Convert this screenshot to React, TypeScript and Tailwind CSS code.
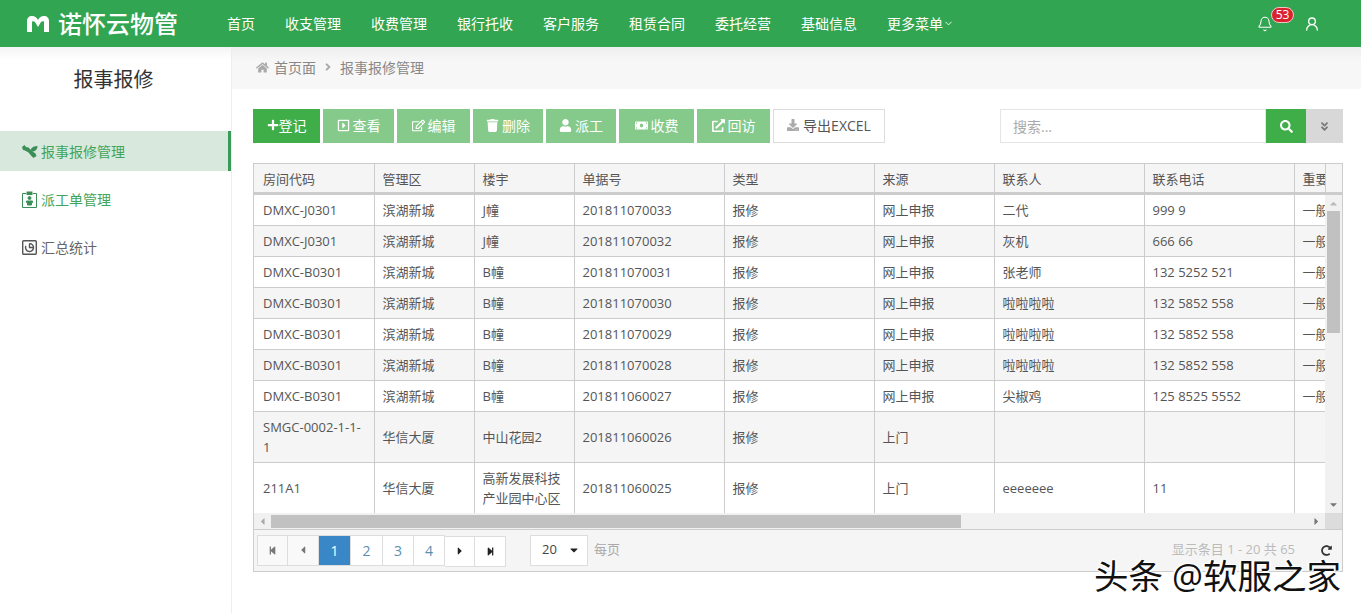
// Repair-report workbench: green top nav, side menu, toolbar and a data table with pager.
import { Bell, ChevronDown, UserRound } from "lucide-react";
import {
  FaAngleDoubleDown,
  FaAngleRight,
  FaCaretDown,
  FaCaretLeft,
  FaCaretRight,
  FaCaretUp,
  FaDownload,
  FaExternalLinkAlt,
  FaHome,
  FaMoneyBill,
  FaPlus,
  FaRedoAlt,
  FaRegCaretSquareRight,
  FaRegEdit,
  FaSearch,
  FaStepBackward,
  FaStepForward,
  FaTrash,
  FaUser,
} from "react-icons/fa";

const NAV = ["首页", "收支管理", "收费管理", "银行托收", "客户服务", "租赁合同", "委托经营", "基础信息"];

const ACTIONS = [
  { label: "查看", icon: FaRegCaretSquareRight, width: "w-[71px]" },
  { label: "编辑", icon: FaRegEdit, width: "w-[73px]" },
  { label: "删除", icon: FaTrash, width: "w-[70px]" },
  { label: "派工", icon: FaUser, width: "w-[70px]" },
  { label: "收费", icon: FaMoneyBill, width: "w-[75px]" },
  { label: "回访", icon: FaExternalLinkAlt, width: "w-[73px]" },
];

const COLUMNS = ["房间代码", "管理区", "楼宇", "单据号", "类型", "来源", "联系人", "联系电话", "重要"];

const ROWS: string[][] = [
  ["DMXC-J0301", "滨湖新城", "J幢", "201811070033", "报修", "网上申报", "二代", "999 9", "一般"],
  ["DMXC-J0301", "滨湖新城", "J幢", "201811070032", "报修", "网上申报", "灰机", "666 66", "一般"],
  ["DMXC-B0301", "滨湖新城", "B幢", "201811070031", "报修", "网上申报", "张老师", "132 5252 521", "一般"],
  ["DMXC-B0301", "滨湖新城", "B幢", "201811070030", "报修", "网上申报", "啦啦啦啦", "132 5852 558", "一般"],
  ["DMXC-B0301", "滨湖新城", "B幢", "201811070029", "报修", "网上申报", "啦啦啦啦", "132 5852 558", "一般"],
  ["DMXC-B0301", "滨湖新城", "B幢", "201811070028", "报修", "网上申报", "啦啦啦啦", "132 5852 558", "一般"],
  ["DMXC-B0301", "滨湖新城", "B幢", "201811060027", "报修", "网上申报", "尖椒鸡", "125 8525 5552", "一般"],
  ["SMGC-0002-1-1-1", "华信大厦", "中山花园2", "201811060026", "报修", "上门", "", "", ""],
  ["211A1", "华信大厦", "高新发展科技产业园中心区", "201811060025", "报修", "上门", "eeeeeee", "11", ""],
];

function ColGroup() {
  return (
    <colgroup>
      <col className="w-[120px]" />
      <col className="w-[100px]" />
      <col className="w-[100px]" />
      <col className="w-[150px]" />
      <col className="w-[150px]" />
      <col className="w-[120px]" />
      <col className="w-[150px]" />
      <col className="w-[150px]" />
      <col className="w-[150px]" />
    </colgroup>
  );
}

function PageButton({ children, className = "" }: { children: React.ReactNode; className?: string }) {
  return (
    <span className={`flex h-[31px] items-center justify-center border-y border-r border-[#ddd] text-[14px] ${className}`}>
      {children}
    </span>
  );
}

export default function App() {
  return (
    <div className="relative flex h-[613px] flex-col overflow-hidden bg-white font-['Open_Sans','Noto_Sans_CJK_SC',sans-serif] text-[13px] text-[#555]">
      <header className="flex h-[47px] shrink-0 items-center bg-[#31a552] text-white">
        <div className="flex w-[227px] items-center pl-[27px]">
          <svg width="22" height="16" viewBox="0 0 22 16" className="mr-[9px]" fill="#fff">
            <path d="M0 5c0-3 2-5 5-5 3 0 5 2 6 4 1-2 3-4 6-4s5 2 5 5v11h-5V6c0-1-2-1-3 0l-3 5-3-5c-1-1-3-1-3 0v10H0z" />
          </svg>
          <span className="text-[24px] leading-none font-medium whitespace-nowrap">诺怀云物管</span>
        </div>
        <nav className="flex items-center gap-[30px] text-[14px] whitespace-nowrap">
          {NAV.map((item) => (
            <span key={item}>{item}</span>
          ))}
          <span className="flex items-center">
            更多菜单
            <ChevronDown size={11} strokeWidth={2} />
          </span>
        </nav>
        <div className="ml-auto flex items-center gap-[31px] pr-[41px]">
          <span className="relative">
            <Bell size={16} strokeWidth={1.6} />
            <span className="absolute -top-[9px] left-[14px] flex h-[16px] w-[23px] items-center justify-center rounded-[8px] border border-[#f3c6c6] bg-[#d9232e] text-[12px] leading-none">
              53
            </span>
          </span>
          <UserRound size={16} strokeWidth={2} />
        </div>
      </header>

      <div className="flex min-h-0 flex-1">
        <aside className="w-[232px] shrink-0 border-r border-[#eee] bg-gradient-to-b from-[#f4f4f4] to-white to-[12px]">
          <h2 className="pt-[18px] pr-[4px] pb-[36px] text-center text-[20px] leading-[30px] font-normal text-[#333]">报事报修</h2>
          <ul className="text-[14px] text-[#3fa55a]">
            <li className="flex h-[40px] items-center gap-[3px] border-r-[3px] border-[#3a9a58] bg-[#d9e8dc] pl-[22px]">
              <svg width="16" height="13" viewBox="0 0 16 13" fill="#3a8f58">
                <path d="M0 2 2.5 0l1.5 2 2.5.5L10 6l3.5 2.5 1 2.5-3 2L9 10.500 6.500 7.500 3 5.500 1 5z" />
                <path d="M8.500 5c1-2.500 3.500-4 7-4 0 3-2 5.500-5 5.500z" />
              </svg>
              报事报修管理
            </li>
            <li className="mt-[8px] flex h-[40px] items-center gap-[4px] pl-[22px]">
              <svg width="15" height="17" viewBox="0 0 15 17" fill="none" stroke="#3a8f58">
                <path d="M4 2.500H.5v14h14v-14H11" />
                <rect x="5" y="1" width="5" height="2.500" fill="#3a8f58" />
                <circle cx="7.500" cy="7" r="1.500" fill="#3a8f58" />
                <path d="M4.500 10h6v1.500h-1V14h-4v-2.500h-1z" fill="#3a8f58" />
              </svg>
              派工单管理
            </li>
            <li className="mt-[8px] flex h-[40px] items-center gap-[4px] pl-[22px] text-[#666]">
              <svg width="15" height="15" viewBox="0 0 15 15" fill="none" stroke="#555" strokeWidth="1.4">
                <rect x="0.7" y="0.7" width="13.6" height="13.6" rx="1" />
                <path d="M7.500 3.500a4 4 0 1 1-3.600 2.300M7.500 3.500v4h3.500" />
              </svg>
              汇总统计
            </li>
          </ul>
        </aside>

        <main className="flex min-w-0 flex-1 flex-col">
          <div className="flex h-[42px] shrink-0 items-center bg-gradient-to-b from-[#eeeeee] to-[#f7f7f7] to-[14px] pb-[2px] pl-[24px] text-[14px] text-[#888]">
            <FaHome size={13} className="mr-[5px] text-[#aaa]" />
            首页面
            <FaAngleRight size={12} className="mx-[6px] text-[#aaa]" />
            报事报修管理
          </div>

          <div className="flex flex-col pt-[20px] pr-[18px] pl-[21px]">
            <div className="flex h-[34px] items-stretch gap-[3px] text-[14px] text-white">
              <button type="button" className="flex w-[67px] items-center justify-center bg-[#3fae49] pb-[2px]">
                <FaPlus size={12} />
                登记
              </button>
              {ACTIONS.map(({ label, icon: Icon, width }) => (
                <button type="button" key={label} className={`flex items-center justify-center gap-[3px] bg-[#85ca8a] pb-[2px] ${width}`}>
                  <Icon size={13} />
                  {label}
                </button>
              ))}
              <button type="button" className="flex w-[112px] items-center justify-center gap-[4px] border border-[#ddd] bg-white pb-[2px] text-[#555]">
                <FaDownload size={12} className="text-[#aaa]" />
                导出EXCEL
              </button>
              <div className="ml-auto flex w-[343px]">
                <div className="flex min-w-0 flex-1 items-center border border-[#e5e5e5] pl-[12px] text-[#aaa]">搜索...</div>
                <span className="flex w-[40px] items-center justify-center bg-[#3fae49]">
                  <FaSearch size={13} />
                </span>
                <span className="flex w-[37px] items-center justify-center bg-[#d8d8d8] text-[#777]">
                  <FaAngleDoubleDown size={11} />
                </span>
              </div>
            </div>

            <div className="mt-[20px] flex h-[409px] flex-col overflow-hidden border border-[#ccc]">
              <div className="flex h-[31px] shrink-0 border-b-[3px] border-[#ccc] bg-[#f5f5f5]">
                <div className="min-w-0 flex-1 overflow-hidden">
                  <table className="w-[1190px] table-fixed">
                    <ColGroup />
                    <thead>
                      <tr>
                        {COLUMNS.map((col, j) => (
                          <th
                            key={col}
                            className={`h-[28px] border-r border-[#ccc] pt-[2px] pr-[8px] text-left leading-5 font-normal whitespace-nowrap ${j === 0 ? "pl-[9px]" : "pl-[8px]"}`}
                          >
                            {col}
                          </th>
                        ))}
                      </tr>
                    </thead>
                  </table>
                </div>
                <div className="w-[17px] shrink-0 border-l border-[#ccc]" />
              </div>

              <div className="flex h-[318px] shrink-0">
                <div className="min-w-0 flex-1 overflow-hidden">
                  <table className="w-[1190px] table-fixed">
                    <ColGroup />
                    <tbody>
                      {ROWS.map((row, i) => (
                        <tr key={row[3]} className={i % 2 === 1 ? "bg-[#f5f5f5]" : "bg-white"}>
                          {row.map((cell, j) => (
                            <td
                              key={j}
                              className={`border-r border-b border-[#ccc] py-[5px] pr-[8px] leading-5 break-words ${j === 0 ? "pl-[9px]" : "pl-[8px]"}`}
                            >
                              {cell}
                            </td>
                          ))}
                        </tr>
                      ))}
                    </tbody>
                  </table>
                </div>
                <div className="flex w-[17px] shrink-0 flex-col items-center justify-between bg-[#f1f1f1] py-[3px] text-[#777]">
                  <FaCaretUp size={11} className="text-[#bbb]" />
                  <span className="-mt-[165px] h-[122px] w-[13px] bg-[#c1c1c1]" />
                  <FaCaretDown size={11} />
                </div>
              </div>

              <div className="flex h-[17px] shrink-0 items-center border-b border-[#ccc] bg-[#f1f1f1] text-[#777]">
                <span className="flex w-[17px] items-center justify-center">
                  <FaCaretLeft size={11} className="text-[#aaa]" />
                </span>
                <span className="h-[13px] w-[690px] bg-[#c1c1c1]" />
                <span className="ml-auto flex w-[17px] items-center justify-center">
                  <FaCaretRight size={11} />
                </span>
                <span className="h-full w-[17px] bg-[#dcdcdc]" />
              </div>

              <div className="flex min-h-0 flex-1 items-center bg-[#f5f5f5] pr-[9px] pb-px pl-[3px]">
                <div className="flex">
                  <PageButton className="w-[31px] border-l bg-[#f9f9f9] text-[#777]">
                    <FaStepBackward size={9} />
                  </PageButton>
                  <PageButton className="w-[31px] bg-[#f9f9f9] text-[#777]">
                    <FaCaretLeft size={12} />
                  </PageButton>
                  <PageButton className="w-[32px] border-[#3a87c8] bg-[#3a87c8] text-white">1</PageButton>
                  <PageButton className="w-[32px] bg-white text-[#5a8fb0]">2</PageButton>
                  <PageButton className="w-[31px] bg-white text-[#5a8fb0]">3</PageButton>
                  <PageButton className="w-[31px] bg-white text-[#5a8fb0]">4</PageButton>
                  <PageButton className="w-[30px] translate-y-px bg-white text-[#222]">
                    <FaCaretRight size={12} />
                  </PageButton>
                  <PageButton className="w-[31px] translate-y-px bg-white text-[#222]">
                    <FaStepForward size={9} />
                  </PageButton>
                </div>
                <div className="ml-[24px] flex h-[31px] w-[58px] items-center justify-between border border-[#ddd] bg-white pr-[7px] pl-[11px] text-[#444]">
                  20
                  <FaCaretDown size={12} className="text-[#222]" />
                </div>
                <span className="ml-[6px] text-[#aaa]">每页</span>
                <span className="ml-auto text-[#bbb]">显示条目 1 - 20 共 65</span>
                <FaRedoAlt size={11} className="mr-[1px] ml-[26px] text-[#333]" />
              </div>
            </div>
          </div>
        </main>
      </div>

      <span className="absolute top-[553px] right-[20px] text-[34.5px] leading-[46px] font-normal whitespace-nowrap text-[#111] [text-shadow:1px_1px_0_#fff,-1px_-1px_0_#fff,2px_0_0_#fff,-2px_0_0_#fff]">
        头条 @软服之家
      </span>
    </div>
  );
}
